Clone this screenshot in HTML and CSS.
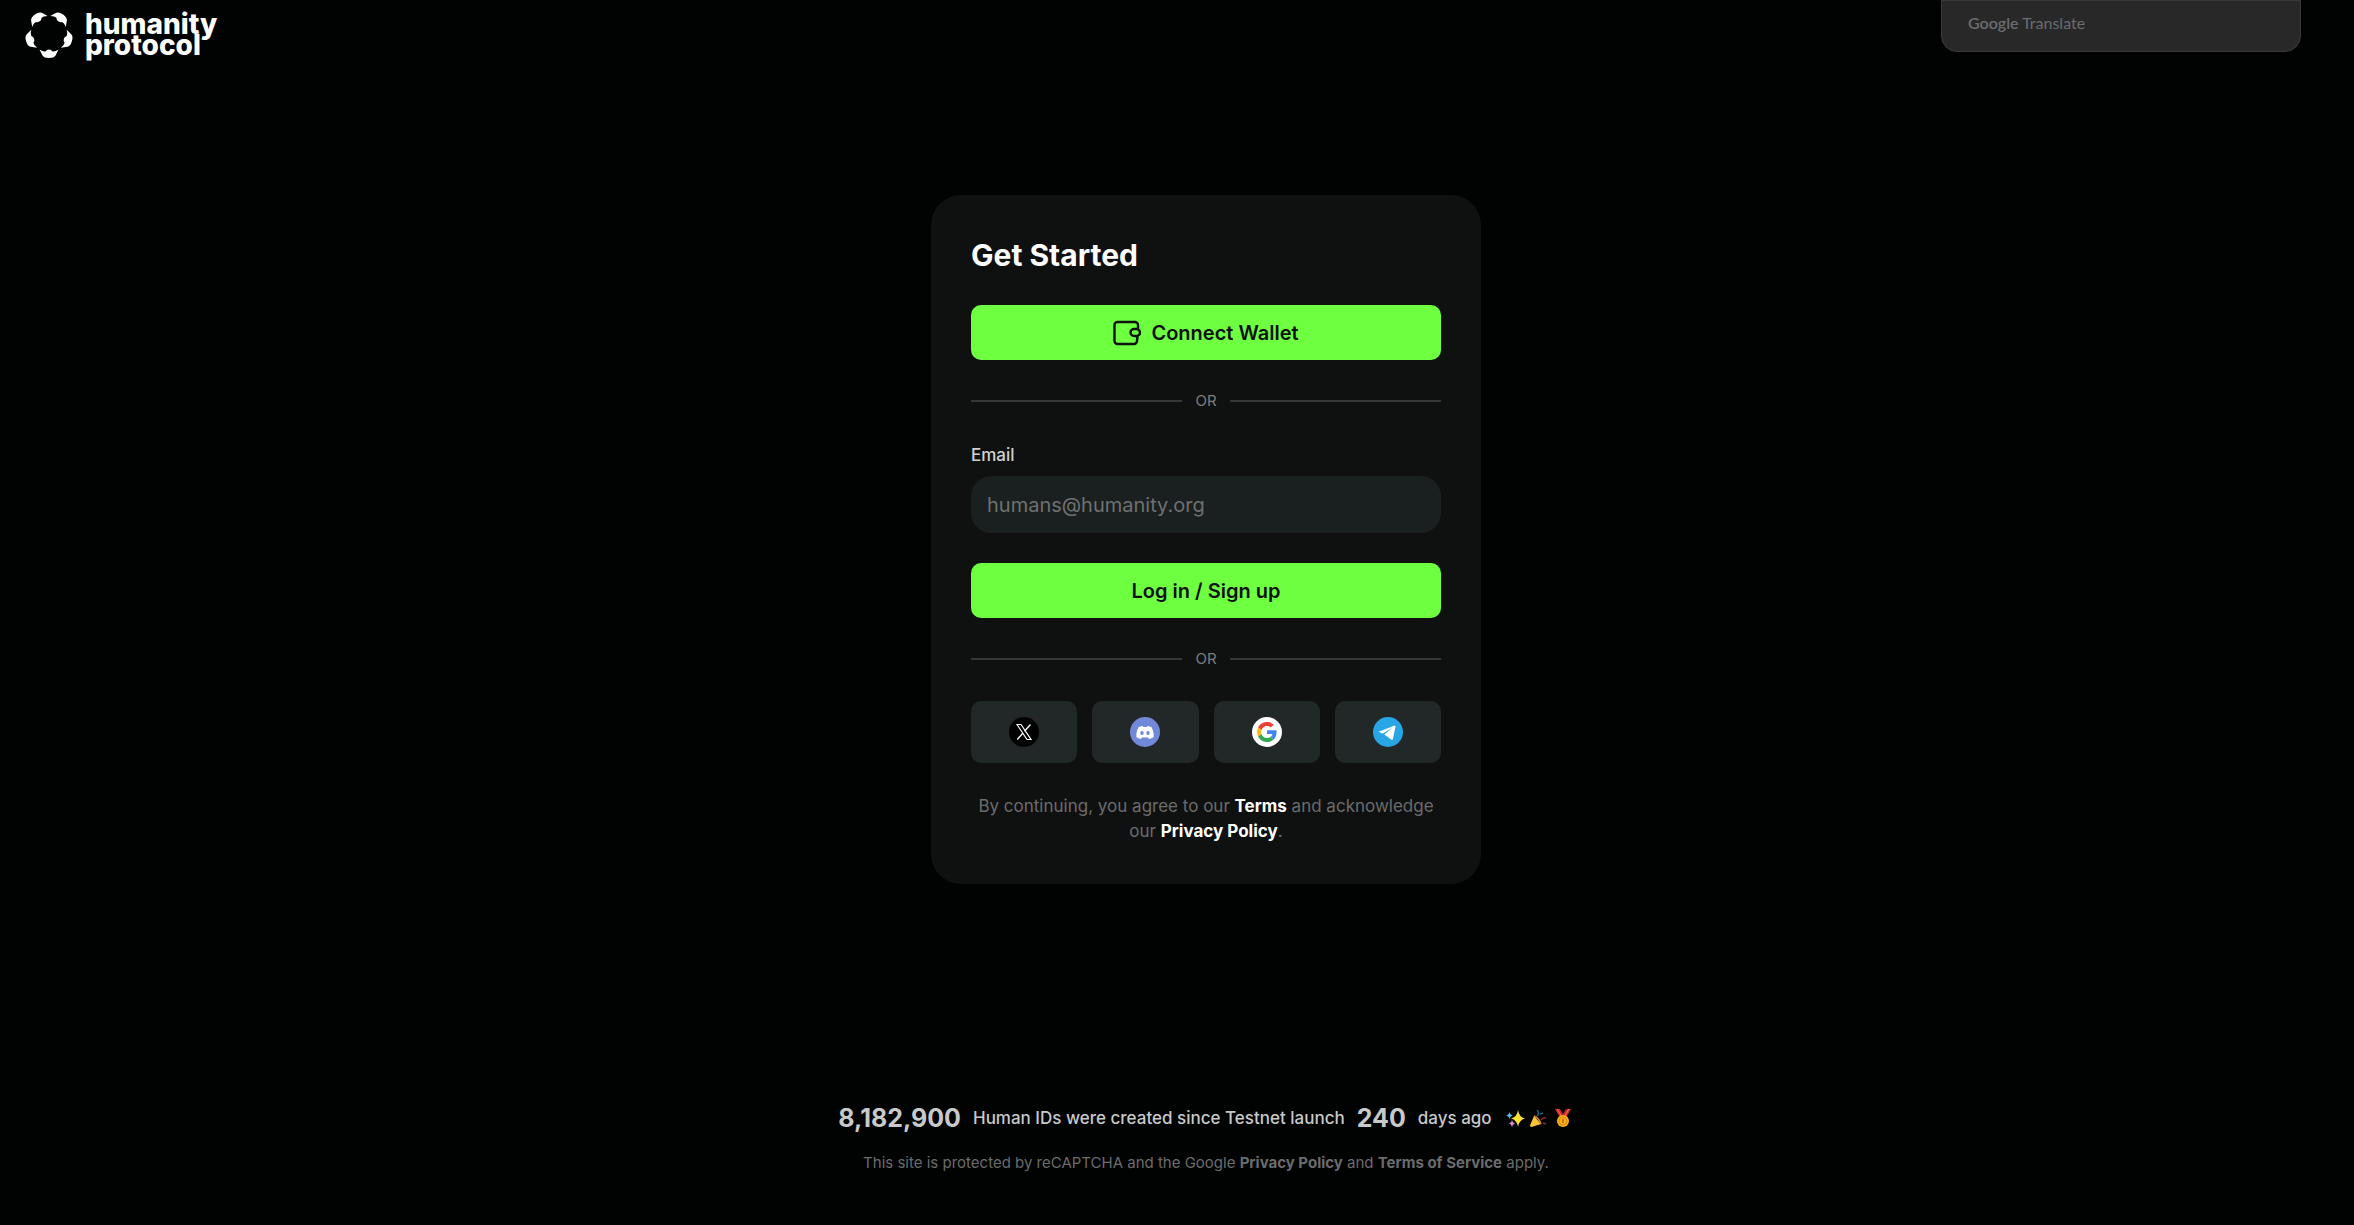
FILE: index.html
```html
<!DOCTYPE html>
<html lang="en">
<head>
  <meta charset="UTF-8">
  <meta name="viewport" content="width=device-width, initial-scale=1.0">
  <title>Humanity Protocol</title>
  <link rel="stylesheet" href="styles.css">
</head>
<body>

<header class="topbar">
  <a href="#" class="logo">
    <svg class="logo-mark" viewBox="0 0 46 46" fill="#fff" aria-hidden="true">
      <path id="petal" d="M13.500 37.500Q17 40 19.500 39.500A4.200 4.200 0 0 1 26.500 39.500Q29 40 32.500 37.500Q31 40.500 29.500 43.500Q28 46 23 46Q18 46 16.500 43.500Q15 40.500 13.500 37.500Z"/>
      <use href="#petal" transform="rotate(72 23 22)"/>
      <use href="#petal" transform="rotate(144 23 22)"/>
      <use href="#petal" transform="rotate(216 23 22)"/>
      <use href="#petal" transform="rotate(288 23 22)"/>
    </svg>
    <span class="logo-text">humanity<br>protocol</span>
  </a>
  <div class="translate"><b>Google</b> Translate</div>
</header>

<main class="content">
  <form class="card">
    <h1>Get Started</h1>

    <button type="button" class="btn">
      <svg class="wallet" viewBox="0 0 28 26" fill="none" stroke="#0f1110" stroke-width="2.4" stroke-linejoin="round" aria-hidden="true">
        <path d="M25 8.500V5a3 3 0 0 0-3-3H4.500a3 3 0 0 0-3 3v16a3 3 0 0 0 3 3H21a3 3 0 0 0 3-3l.5-4.500"/>
        <rect x="17.500" y="9" width="9.500" height="7" rx="3.500"/>
      </svg>
      Connect Wallet
    </button>

    <div class="divider">OR</div>

    <label for="email">Email</label>
    <input type="email" id="email" placeholder="humans@humanity.org">

    <button type="submit" class="btn">Log in / Sign up</button>

    <div class="divider">OR</div>

    <div class="socials">
      <button type="button" class="social" aria-label="X">
        <svg viewBox="0 0 30 30" aria-hidden="true">
          <circle cx="15" cy="15" r="15" fill="#000"/>
          <path d="M8 7.500h4l10 15h-4z" fill="none" stroke="#fff" stroke-width="1.200"/>
          <path d="M21.500 7.500l-6 6.800M14 16l-5.800 6.500" stroke="#fff" stroke-width="1.300"/>
        </svg>
      </button>
      <button type="button" class="social" aria-label="Discord">
        <svg viewBox="0 0 30 30" aria-hidden="true">
          <circle cx="15" cy="15" r="15" fill="#7289da"/>
          <path d="M12.600 9c-1.500.2-2.700.6-3.900 1.100C6.800 13 6.200 16.500 6.400 20c1.500 1.200 3 1.700 4.600 2l1.200-1.800c1.900.4 3.700.4 5.600 0L19 22c1.600-.3 3.100-.8 4.600-2 .3-3.700-.5-7-2.300-9.900-1.200-.5-2.400-.9-3.900-1.100l-.6 1.100c-1.200-.2-2.400-.2-3.600 0z" fill="#fff"/>
          <ellipse cx="12" cy="16" rx="1.700" ry="1.900" fill="#7289da"/>
          <ellipse cx="18" cy="16" rx="1.700" ry="1.900" fill="#7289da"/>
        </svg>
      </button>
      <button type="button" class="social" aria-label="Google">
        <svg viewBox="0 0 30 30" aria-hidden="true">
          <circle cx="15" cy="15" r="15" fill="#fff"/>
          <g transform="translate(5 5) scale(.4167)">
            <path fill="#ea4335" d="M24 9.500c3.540 0 6.710 1.220 9.210 3.600l6.850-6.850C35.900 2.380 30.470 0 24 0 14.620 0 6.510 5.380 2.560 13.220l7.980 6.190C12.430 13.720 17.740 9.500 24 9.500z"/>
            <path fill="#4285f4" d="M46.980 24.550c0-1.570-.15-3.090-.38-4.550H24v9.020h12.940c-.58 2.960-2.260 5.480-4.780 7.180l7.730 6c4.510-4.180 7.090-10.360 7.090-17.650z"/>
            <path fill="#fbbc05" d="M10.530 28.590c-.48-1.450-.76-2.990-.76-4.590s.27-3.140.76-4.590l-7.980-6.190C.92 16.460 0 20.120 0 24c0 3.880.92 7.540 2.560 10.780l7.970-6.190z"/>
            <path fill="#34a853" d="M24 48c6.480 0 11.930-2.130 15.890-5.810l-7.730-6c-2.150 1.450-4.920 2.300-8.160 2.300-6.260 0-11.570-4.220-13.470-9.910l-7.980 6.190C6.510 42.620 14.620 48 24 48z"/>
          </g>
        </svg>
      </button>
      <button type="button" class="social" aria-label="Telegram">
        <svg viewBox="0 0 30 30" aria-hidden="true">
          <circle cx="15" cy="15" r="15" fill="#28a5e5"/>
          <path d="M5.600 14.800L21 8.800c1-.4 1.700.2 1.400 1.500l-2.500 11.600c-.2 1-.9 1.200-1.700.7L11.300 17.500l7.900-6.700-9.600 6z" fill="#fff"/>
        </svg>
      </button>
    </div>

    <p class="terms">By continuing, you agree to our <a href="#">Terms</a> and acknowledge our <a href="#">Privacy Policy</a>.</p>
  </form>
</main>

<footer>
  <p class="stats">
    <strong>8,182,900</strong>
    <span>Human IDs were created since Testnet launch</span>
    <strong>240</strong>
    <span>days ago</span>
    <svg class="emojis" viewBox="0 0 68 20" aria-hidden="true">
      <path d="M12 2Q13 9 19 10.500Q13 12 12 19Q11 12 5 10.500Q11 9 12 2Z" fill="#fde330"/>
      <path d="M3.500 4Q4 7 6.500 7.500Q4 8 3.500 11Q3 8 .5 7.500Q3 7 3.500 4Z" fill="#4fb6e8"/>
      <path d="M6 12Q6.500 15 9 15.500Q6.500 16 6 19Q5.500 16 3 15.500Q5.500 15 6 12Z" fill="#d88bd2"/>
      <path d="M28 8l7 8-9.500 3q-1.500 0-1.500-1.500z" fill="#fcc43c"/>
      <path d="M28 8q5 2 7 8" stroke="#d98b28" stroke-width="1.500" fill="none"/>
      <path d="M31 8q3-3 0-6M34 6l3-1" stroke="#1f6678" stroke-width="1.500" fill="none"/>
      <path d="M35 12q2-3 5-2M37 15l3 1" stroke="#9c2a22" stroke-width="1.500" fill="none"/>
      <path d="M49 1h5l3 5 3-5h5l-5 9h-6z" fill="#c62828"/>
      <path d="M51 1l5 8M63 1l-5 8" stroke="#ff6f61" stroke-width="1"/>
      <circle cx="57" cy="13" r="6" fill="#fbb117"/>
      <circle cx="57" cy="13" r="4" fill="none" stroke="#d88712"/>
      <path d="M57 11v4" stroke="#b56a08" stroke-width="1.500"/>
    </svg>
  </p>
  <p class="recaptcha">This site is protected by reCAPTCHA and the Google <a href="#">Privacy Policy</a> and <a href="#">Terms of Service</a> apply.</p>
</footer>

</body>
</html>
```
FILE: styles.css
```css
* {
  box-sizing: border-box;
}

body {
  margin: 0;
  min-height: 100vh;
  display: flex;
  flex-direction: column;
  background: #010202;
  color: #fff;
  font-family: Inter, sans-serif;
}

a {
  color: inherit;
  font-weight: 700;
  text-decoration: none;
}

.topbar {
  display: flex;
  justify-content: space-between;
  align-items: flex-start;
  height: 59px;
  padding: 0 53px 0 26px;
}

.logo {
  display: flex;
  align-items: center;
  gap: 13px;
  padding-top: 12px;
}

.logo-mark {
  width: 46px;
  height: 46px;
  overflow: visible;
}

.logo-text {
  font-size: 28px;
  font-weight: 800;
  line-height: 21px;
}

.translate {
  width: 360px;
  height: 52px;
  padding: 11px 26px;
  background: #282828;
  border: 1px solid #3a3a3a;
  border-radius: 0 0 16px 16px;
  color: #6b6c6e;
  font-family: Lato, sans-serif;
  font-size: 16px;
  line-height: 22px;
}

.translate b {
  font-weight: 600;
}

.content {
  display: flex;
  justify-content: center;
  padding: 136px 0 0 58px;
}

.card {
  display: flex;
  flex-direction: column;
  width: 550px;
  padding: 40px;
  background: #0f1110;
  border-radius: 30px;
}

h1 {
  margin: 0 0 30px;
  font-size: 30px;
  line-height: 40px;
}

.btn {
  display: flex;
  justify-content: center;
  align-items: center;
  gap: 10px;
  height: 55px;
  border: none;
  border-radius: 10px;
  background: #6eff40;
  color: #0f1110;
  font-family: inherit;
  font-size: 20px;
  font-weight: 600;
  cursor: pointer;
}

.wallet {
  width: 28px;
  height: 26px;
}

.divider {
  display: flex;
  align-items: center;
  gap: 13px;
  margin: 30px 0 31px;
  color: #7c7d7d;
  font-size: 15px;
  line-height: 22px;
}

.divider::before,
.divider::after {
  content: "";
  flex: 1;
  height: 2px;
  background: #363838;
}

label {
  margin-bottom: 8px;
  color: #d0d1d1;
  font-size: 17px;
  font-weight: 500;
  line-height: 25px;
}

input {
  height: 57px;
  margin-bottom: 30px;
  padding: 0 15px;
  border: 1px solid #1c2020;
  border-radius: 20px;
  background: #1a1f1f;
  color: #fff;
  font-family: inherit;
  font-size: 20px;
}

input::placeholder {
  color: #6f7171;
}

.socials {
  display: grid;
  grid-template-columns: repeat(4, 1fr);
  gap: 15px;
}

.social {
  display: flex;
  justify-content: center;
  align-items: center;
  height: 62px;
  padding: 0;
  border: none;
  border-radius: 10px;
  background: #222727;
  cursor: pointer;
}

.social svg {
  width: 30px;
  height: 30px;
}

.terms {
  margin: 31px 0 0;
  color: #6b6c6c;
  font-size: 17px;
  line-height: 25px;
  text-align: center;
}

.terms a {
  color: #fff;
}

footer {
  margin-top: auto;
  padding: 0 0 50px 58px;
  text-align: center;
}

.stats {
  display: flex;
  justify-content: center;
  align-items: center;
  gap: 12px;
  margin: 0 0 15px;
  color: #c8c9c9;
  font-size: 17px;
  font-weight: 500;
  line-height: 36px;
}

.stats strong {
  font-size: 25px;
}

.emojis {
  width: 68px;
  height: 20px;
  margin-left: 2px;
}

.recaptcha {
  margin: 0;
  color: #6b6c6c;
  font-size: 15px;
  line-height: 24px;
}
```
